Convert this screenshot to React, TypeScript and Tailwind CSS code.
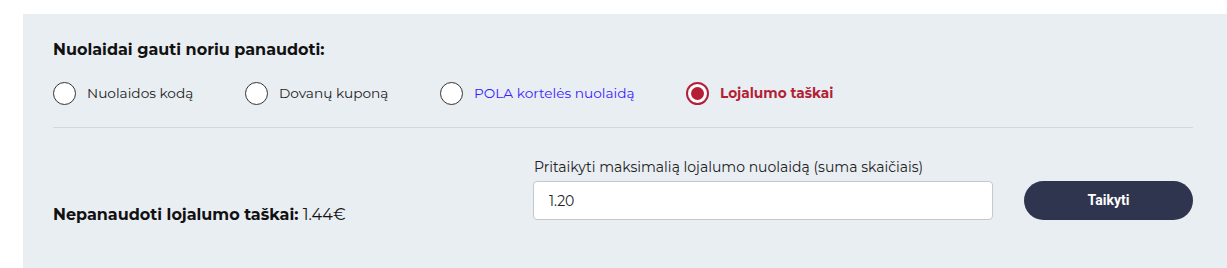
import React, { useState } from "react";

type Option = {
  id: string;
  label: string;
};

const options: Option[] = [
  { id: "code", label: "Nuolaidos kodą" },
  { id: "gift", label: "Dovanų kuponą" },
  { id: "pola", label: "POLA kortelės nuolaidą" },
  { id: "loyalty", label: "Lojalumo taškai" },
];

const Radio = ({
  option,
  checked,
  onSelect,
  className,
}: {
  option: Option;
  checked: boolean;
  onSelect: () => void;
  className: string;
}) => {
  let labelClass = "text-[13.7px] text-[#222]";
  if (option.id === "pola") labelClass = "text-[13.7px] text-[#3a1cff]";
  if (checked) labelClass = "text-[13.7px] font-bold text-[#b41f36]";
  return (
    <label
      className={`flex items-center gap-[11px] cursor-pointer ${className}`}
      onClick={onSelect}
    >
      {checked ? (
        <span className="flex h-[23px] w-[23px] items-center justify-center rounded-full border-2 border-[#b41f36] bg-white">
          <span className="h-[13px] w-[13px] rounded-full bg-[#b41f36]" />
        </span>
      ) : (
        <span className="h-[23px] w-[23px] rounded-full border-[1.5px] border-[#333] bg-white" />
      )}
      <span className={labelClass}>{option.label}</span>
    </label>
  );
};

const App = () => {
  const [selected, setSelected] = useState("loyalty");
  const [amount, setAmount] = useState("1.20");

  return (
    <div className="h-[268px] w-[1227px] bg-white pt-[14px] pl-[23px] font-['Montserrat','Noto_Sans',sans-serif]">
      <div className="h-[254px] bg-[#e9eef3] pl-[30px] pr-[34px] pt-[24px]">
        <h3 className="text-[16px] font-bold leading-[24px] text-[#111]">
          Nuolaidai gauti noriu panaudoti:
        </h3>
        <div className="mt-[20px] flex items-center pb-[22px]">
          <Radio
            option={options[0]}
            checked={selected === "code"}
            onSelect={() => setSelected("code")}
            className="w-[192px]"
          />
          <Radio
            option={options[1]}
            checked={selected === "gift"}
            onSelect={() => setSelected("gift")}
            className="w-[195px]"
          />
          <Radio
            option={options[2]}
            checked={selected === "pola"}
            onSelect={() => setSelected("pola")}
            className="w-[246px]"
          />
          <Radio
            option={options[3]}
            checked={selected === "loyalty"}
            onSelect={() => setSelected("loyalty")}
            className=""
          />
        </div>
        <div className="border-t border-[#d3d8dd]" />
        <div className="mt-[30px] flex items-start">
          <div className="mt-[45px] w-[480px] text-[16px] leading-[24px] text-[#111]">
            <span className="font-bold">Nepanaudoti lojalumo taškai:</span>{" "}
            <span className="font-normal">1.44€</span>
          </div>
          <div className="w-[460px]">
            <div className="mb-[5px] pl-[1px] text-[14px] leading-[18px] text-[#222]">
              Pritaikyti maksimalią lojalumo nuolaidą (suma skaičiais)
            </div>
            <input
              autoFocus
              value={amount}
              onChange={(e) => setAmount(e.target.value)}
              className="h-[39px] w-[460px] rounded-[4px] border border-[#c4c7cb] bg-white px-[15px] text-[14px] text-[#222] outline-none"
            />
          </div>
          <button className="ml-[31px] mt-[23px] h-[39px] w-[169px] rounded-full bg-[#30354f] font-['Liberation_Sans_Narrow','Roboto',sans-serif] text-[14px] font-bold text-white">
            Taikyti
          </button>
        </div>
      </div>
    </div>
  );
};

export default App;
